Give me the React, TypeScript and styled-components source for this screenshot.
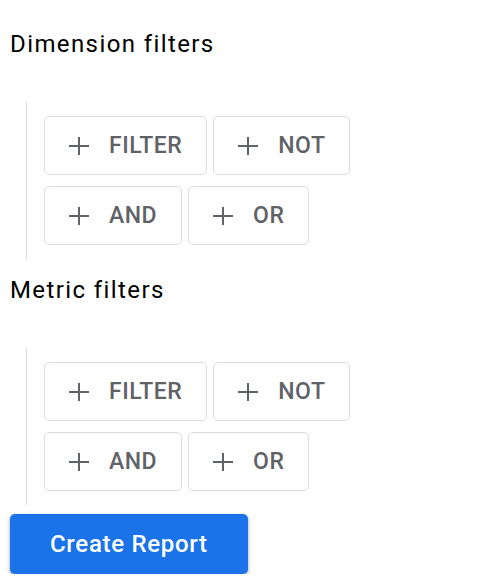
import styled, { createGlobalStyle } from "styled-components";

const GlobalStyle = createGlobalStyle`
  body {
    margin: 0;
    background: #fff;
    font-family: Roboto, "Liberation Sans", Arial, sans-serif;
  }
`;

const Page = styled.div`
  padding: 28px 0 0 10px;
  display: flex;
  flex-direction: column;
`;

const Title = styled.h2`
  margin: 0;
  font-size: 24px;
  line-height: 32px;
  font-weight: 400;
  letter-spacing: 1.4px;
  color: #000;
`;

const FilterGroup = styled.div`
  margin: 42px 0 15px 16px;
  padding: 14px 0 14px 17px;
  border-left: 1px solid #dadce0;
  display: flex;
  flex-direction: column;
  gap: 11px;
`;

const LastGroup = styled(FilterGroup)`
  margin-bottom: 9px;
`;

const Row = styled.div`
  display: flex;
  gap: 6px;
`;

const OutlineButton = styled.button`
  display: flex;
  align-items: center;
  gap: 20px;
  height: 59px;
  padding: 0 24px;
  background: #fff;
  border: 1px solid #dadce0;
  border-radius: 5px;
  color: #5f6368;
  font-family: Roboto, "Liberation Sans", Arial, sans-serif;
  font-size: 23px;
  font-weight: 500;
  letter-spacing: 0.5px;
  text-transform: uppercase;
  cursor: pointer;
`;

const PrimaryButton = styled.button`
  align-self: flex-start;
  height: 60px;
  padding: 0 40px;
  background: #1a73e8;
  border: none;
  border-radius: 5px;
  color: #fff;
  font-family: Roboto, "Liberation Sans", Arial, sans-serif;
  font-size: 24px;
  font-weight: 500;
  letter-spacing: 0.7px;
  box-shadow: 0 1px 2px rgba(60, 64, 67, 0.3), 0 2px 4px 1px rgba(60, 64, 67, 0.2);
  cursor: pointer;
`;

const PlusIcon = () => (
  <svg width="20" height="20" viewBox="0 0 20 20" aria-hidden="true">
    <path d="M10 1v18M0 10h20" stroke="currentColor" strokeWidth="2" fill="none" />
  </svg>
);

const AddButton = ({ label }: { label: string }) => (
  <OutlineButton type="button">
    <PlusIcon />
    {label}
  </OutlineButton>
);

const FilterButtons = () => (
  <>
    <Row>
      <AddButton label="Filter" />
      <AddButton label="Not" />
    </Row>
    <Row>
      <AddButton label="And" />
      <AddButton label="Or" />
    </Row>
  </>
);

const App = () => (
  <>
    <GlobalStyle />
    <Page>
      <Title>Dimension filters</Title>
      <FilterGroup>
        <FilterButtons />
      </FilterGroup>
      <Title>Metric filters</Title>
      <LastGroup>
        <FilterButtons />
      </LastGroup>
      <PrimaryButton type="button">Create Report</PrimaryButton>
    </Page>
  </>
);

export default App;
